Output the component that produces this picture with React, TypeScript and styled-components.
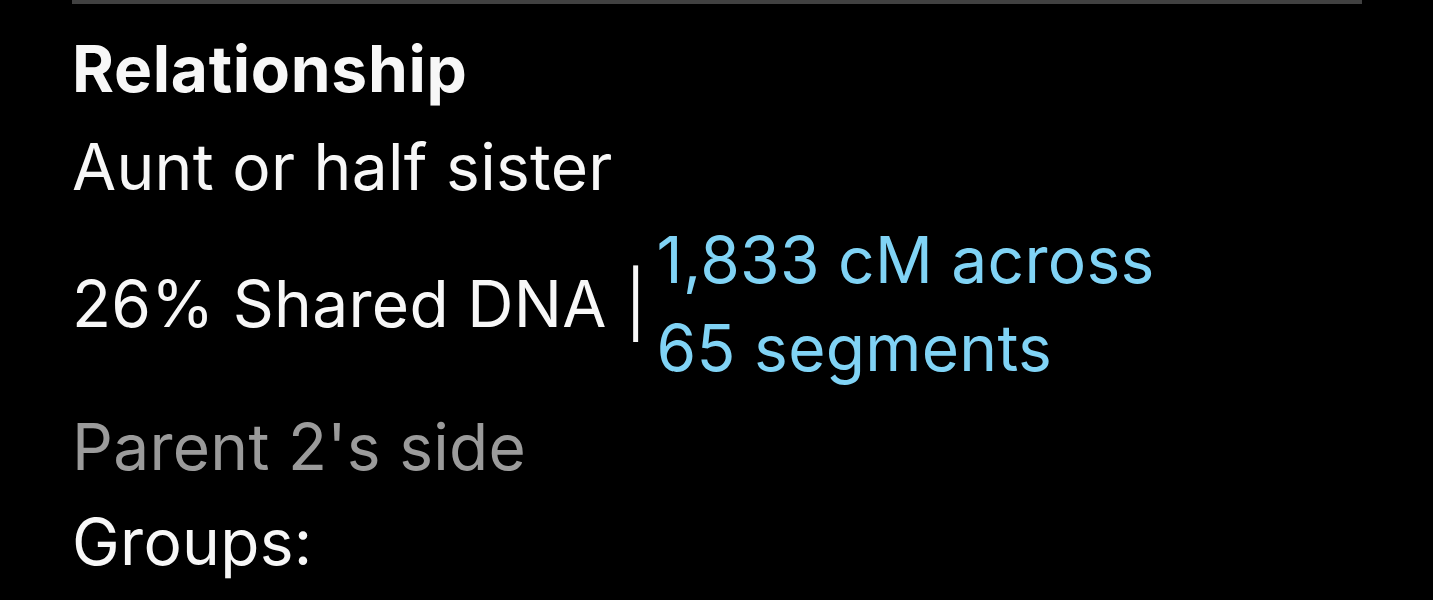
import styled, { createGlobalStyle } from "styled-components"

const GlobalStyle = createGlobalStyle`
    html, body {
        margin: 0;
        padding: 0;
        background: #000;
    }
    body {
        font-family: Inter, "Noto Sans", "Liberation Sans", sans-serif;
        color: #f5f5f5;
        -webkit-font-smoothing: antialiased;
    }
`

const Panel = styled.div`
    width: 1433px;
    height: 600px;
    overflow: hidden;
    padding: 0 71px 0 72px;
    box-sizing: border-box;
    display: flex;
    flex-direction: column;
`

const Divider = styled.div`
    height: 4px;
    background: #414141;
    flex-shrink: 0;
`

const Heading = styled.div`
    margin-top: 21px;
    font-size: 64px;
    line-height: 88px;
    font-weight: 700;
    letter-spacing: 0.7px;
    color: #f7f7f7;
`

const Line = styled.div<{ $muted?: boolean; $top: number }>`
    margin-top: ${p => p.$top}px;
    font-size: 64px;
    line-height: 88px;
    font-weight: 400;
    letter-spacing: 0.3px;
    color: ${p => (p.$muted ? "#9b9b9b" : "#f7f7f7")};
`

const DnaRow = styled.div`
    margin-top: 5px;
    display: flex;
    align-items: center;
    font-size: 64px;
    line-height: 88px;
    letter-spacing: 0.3px;
`

const Shared = styled.span`
    flex-shrink: 0;
    white-space: pre;
    color: #f7f7f7;
`

const Segments = styled.span`
    margin-left: 10px;
    max-width: 540px;
    color: #80d3f5;
`

export default function App() {
    return (
        <>
            <GlobalStyle />
            <Panel>
                <Divider />
                <Heading>Relationship</Heading>
                <Line $top={10}>Aunt or half sister</Line>
                <DnaRow>
                    <Shared>26% Shared DNA |</Shared>
                    <Segments>1,833 cM across 65 segments</Segments>
                </DnaRow>
                <Line $top={11} $muted>Parent 2's side</Line>
                <Line $top={7}>Groups:</Line>
            </Panel>
        </>
    )
}
